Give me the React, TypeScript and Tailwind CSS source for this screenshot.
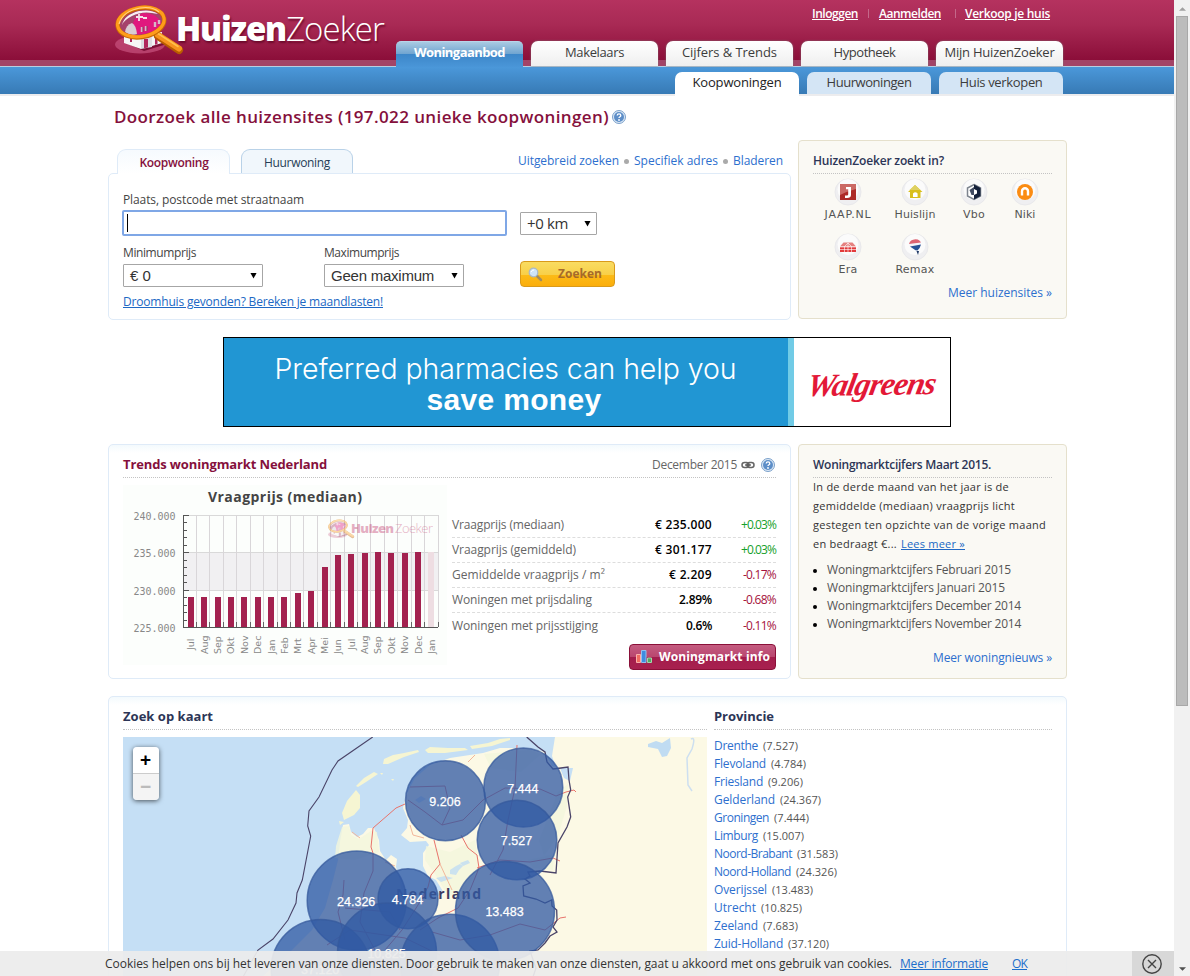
import React, { useLayoutEffect, useRef } from "react";

/* One line of text whose tracking is set so that the line is `w` pixels wide. */
function Fit({ w, className = "", children }: { w: number; className?: string; children: string }) {
  const ref = useRef<HTMLSpanElement>(null);
  useLayoutEffect(() => {
    const el = ref.current;
    if (!el) return;
    el.style.letterSpacing = "0px";
    const natural = el.getBoundingClientRect().width;
    el.style.letterSpacing = `${(w - natural) / children.length}px`;
  }, [w, children]);
  return (
    <span ref={ref} className={`inline-block shrink-0 whitespace-nowrap ${className}`}>
      {children}
    </span>
  );
}

function Magnifier({ className }: { className: string }) {
  return (
    <svg viewBox="0 0 70 50" className={className}>
      <ellipse cx="25" cy="39.500" rx="25" ry="9" fill="#c7527f" opacity=".7" />
      <path d="M9 37 L26 43 L46 36 L52 39 L29 46Z" fill="#7d0f37" />
      <path d="M9 27 L26 31 V44 L9 38Z" fill="#f6f6f6" />
      <path d="M26 31 L37 29 V42 L26 44Z" fill="#dcdce2" />
      <path d="M37 28 L47 27 V38 L37 41Z" fill="#f3f3f5" />
      <path d="M29 34h4v8.500l-4 .8z M40 33h2.500v6l-2.500 .8z M15 33h2v4h-2z" fill="#b0265c" />
      <ellipse cx="26" cy="18.500" rx="22" ry="13" fill="#a5426c" transform="rotate(-10 26 19)" />
      <path d="M7 20 Q9 10 24 6 Q37 4 43 9 Q28 5 17 11 Q9 15 7 20Z" fill="#f7eef2" />
      <path d="M17 24 Q18 11 28 8 Q41 8 46 17 L45 24 Q32 31 19 29Z" fill="#e0187e" />
      <path d="M10 27 Q11 20 17 18 Q21 20 22 29 Q15 31 10 27Z" fill="#d9ccd3" />
      <path d="M24 9 v7 M21 12 h7 M28 13h4" stroke="#f6dfe9" strokeWidth="1.800" />
      <path d="M27 22 v5 M31 21 v5 M40 17 v5 M44 15v4" stroke="#d8b9c8" strokeWidth="2.400" />
      <path d="M28 22 v5 M32 21 v5" stroke="#8a1a50" strokeWidth="1" />
      <path d="M43 31 L64 45" stroke="#b85c00" strokeWidth="8" strokeLinecap="round" />
      <path d="M43 30 L64 43.500" stroke="#f7931e" strokeWidth="6" strokeLinecap="round" />
      <path d="M43 28.500 L63 41.500" stroke="#ffc04d" strokeWidth="1.500" strokeLinecap="round" />
      <ellipse cx="26" cy="17.500" rx="23.500" ry="14.500" fill="none" stroke="#c96a05" strokeWidth="4.500" transform="rotate(-10 26 18)" />
      <ellipse cx="26" cy="17" rx="23.500" ry="14.500" fill="none" stroke="#ff9d1a" strokeWidth="3.200" transform="rotate(-10 26 18)" />
      <path d="M4 19 Q8 6 25 3 Q37 1 44 7" fill="none" stroke="#ffd48a" strokeWidth="1.200" />
    </svg>
  );
}

function HelpIcon({ className }: { className: string }) {
  return (
    <svg viewBox="0 0 14 14" className={className}>
      <circle cx="7" cy="7" r="6.500" fill="#dbe8f5" stroke="#7ba0ca" />
      <circle cx="7" cy="7" r="5" fill="#5d8ec8" />
      <path d="M5.200 5.500 Q5.300 3.900 7 3.900 Q8.800 3.900 8.800 5.400 Q8.800 6.400 7.600 7 Q7 7.300 7 8.100" fill="none" stroke="#fff" strokeWidth="1.300" />
      <circle cx="7" cy="10" r=".9" fill="#fff" />
    </svg>
  );
}

const mainTabs = [
  { t: "Makelaars", w: 59 },
  { t: "Cijfers & Trends", w: 95 },
  { t: "Hypotheek", w: 62 },
  { t: "Mijn HuizenZoeker", w: 110 },
];

function Header() {
  return (
    <header className="shrink-0 text-[#3c3c3c]">
      <div className="flex h-[67px] border-b border-[#b9cfe2] bg-[linear-gradient(#b5325f_0px,#a92a55_24px,#8b0e39_60px,#a34467_60px,#a34467_66px)]">
        <div className="ml-[115px] flex h-[60px] w-[281px] pt-[5px]">
          <Magnifier className="h-[50px] w-[70px] shrink-0" />
          <div className="-ml-[9px] flex h-[46px] items-center text-[33px] leading-none text-white [text-shadow:1px_2px_2px_#6d0a2c]">
            <Fit w={110} className="font-extrabold">Huizen</Fit>
            <Fit w={98} className="font-[350]">Zoeker</Fit>
          </div>
        </div>
        <div className="flex w-[667px] flex-col justify-between">
          <div className="flex h-[27px] items-center justify-end pr-[13px] text-[12px] font-semibold text-white">
            <Fit w={46} className="underline">Inloggen</Fit>
            <span className="mx-[10px] h-[9px] w-px bg-[#c4688a]" />
            <Fit w={62} className="underline">Aanmelden</Fit>
            <span className="mr-[9px] ml-[14px] h-[9px] w-px bg-[#c4688a]" />
            <Fit w={85} className="underline">Verkoop je huis</Fit>
          </div>
          <nav className="-mb-px flex h-[26px] gap-[8px] text-[13px]">
            <div className="flex w-[127px] justify-center rounded-t-[5px] border-t border-[#b9d5ea] bg-[linear-gradient(#a9cae2,#6fa4d0_12px,#3c86c8_12px,#4a96d8)] pt-px font-bold text-white">
              <Fit w={91}>Woningaanbod</Fit>
            </div>
            {mainTabs.map((m) => (
              <div key={m.t} className="mb-px flex w-[127px] justify-center rounded-t-[7px] bg-linear-to-b from-white to-[#efefef] pt-[2px] shadow-[0_0_2px_#777]">
                <Fit w={m.w}>{m.t}</Fit>
              </div>
            ))}
          </nav>
        </div>
      </div>
      <div className="flex h-[29px] justify-end gap-[8px] border-b-2 border-[#ececee] bg-linear-to-b from-[#4b98da] to-[#377ab5] pt-[5px] pr-[111px] text-[13px]">
        <div className="-mb-[2px] flex w-[124px] justify-center rounded-t-[7px] bg-white pt-px font-medium text-[#222]">
          <Fit w={89}>Koopwoningen</Fit>
        </div>
        <div className="flex w-[124px] justify-center rounded-t-[7px] bg-[#d4e5f5] pt-px">
          <Fit w={85}>Huurwoningen</Fit>
        </div>
        <div className="flex w-[124px] justify-center rounded-t-[7px] bg-[#d4e5f5] pt-px">
          <Fit w={83}>Huis verkopen</Fit>
        </div>
      </div>
    </header>
  );
}

function Select({ className, label, w }: { className: string; label: string; w: number }) {
  return (
    <div className={`flex h-[23px] items-center justify-between rounded-[1px] border border-[#a6a6a6] bg-white pr-[5px] pl-[6px] text-[15px] text-[#333] ${className}`}>
      <Fit w={w}>{label}</Fit>
      <svg viewBox="0 0 8 7" className="h-[7px] w-[7px]">
        <path d="M0.500 0.500h7L4 7z" fill="#000" />
      </svg>
    </div>
  );
}

function SearchPanel() {
  return (
    <section className="flex w-[683px] flex-col">
      <div className="-mb-px flex h-[34px] items-end pl-[9px] text-[12px]">
        <div className="flex h-[25px] w-[113px] justify-center rounded-t-[9px] border border-b-0 border-[#dfebf8] bg-linear-to-b from-[#f6fafe] to-white pt-[4px] pl-px font-semibold text-[#85103c]">
          <Fit w={69}>Koopwoning</Fit>
        </div>
        <div className="mb-px ml-[11px] flex h-[24px] w-[112px] justify-center rounded-t-[9px] border border-b-0 border-[#b9d2e8] bg-[#f1f7fc] pt-[4px] text-[#263d56]">
          <Fit w={66}>Huurwoning</Fit>
        </div>
        <div className="mb-[4px] ml-auto flex items-center gap-[5px] pr-[8px] text-[#2d6fce]">
          <Fit w={101}>Uitgebreid zoeken</Fit>
          <span className="size-[5px] rounded-full bg-[#aaa]" />
          <Fit w={84}>Specifiek adres</Fit>
          <span className="size-[5px] rounded-full bg-[#aaa]" />
          <Fit w={50}>Bladeren</Fit>
        </div>
      </div>
      <div className="-z-10 h-[147px] rounded-[5px] border border-[#dfebf8] bg-white px-[14px] pt-[17px] text-[12px] leading-[18px] text-[#444]">
        <div className="h-[19px]"><Fit w={181}>Plaats, postcode met straatnaam</Fit></div>
        <div className="-ml-px flex items-center gap-[13px]">
          <div className="flex h-[26px] w-[385px] items-center rounded-[2px] border-2 border-[#7fa7e6] bg-white pl-[3px]">
            <span className="h-[18px] w-px bg-black" />
          </div>
          <Select className="w-[77px]" label="+0 km" w={41} />
        </div>
        <div className="mt-[8px] flex">
          <div className="w-[201px]"><Fit w={73}>Minimumprijs</Fit></div>
          <Fit w={75}>Maximumprijs</Fit>
        </div>
        <div className="flex h-[26px] items-start pt-px font-['Liberation_Sans',sans-serif]">
          <Select className="mt-px w-[140px]" label="€ 0" w={21} />
          <Select className="mt-px ml-[61px] w-[140px]" label="Geen maximum" w={103} />
          <div className="-mt-[2px] ml-[56px] flex h-[26px] w-[95px] items-center rounded-[4px] border border-[#d99a1a] bg-[linear-gradient(#f9dc62,#f8cf48_13px,#fcbb17_13px,#fbae0c)] pl-[7px] font-['Open_Sans',sans-serif] font-bold text-[#a66a2a]">
            <svg viewBox="0 0 15 15" className="size-[15px] shrink-0">
              <path d="M8.500 8.500 L13 13" stroke="#a08a60" strokeWidth="2.500" strokeLinecap="round" />
              <circle cx="5.500" cy="5.500" r="4.300" fill="#cfe4f8" stroke="#a8b8c8" strokeWidth="1.200" />
              <path d="M3 5 Q4 3 6 3" stroke="#fff" fill="none" />
            </svg>
            <Fit w={44} className="ml-[15px]">Zoeken</Fit>
          </div>
        </div>
        <div className="pt-[5px] text-[#2068c4]"><Fit w={260} className="underline">Droomhuis gevonden? Bereken je maandlasten!</Fit></div>
      </div>
    </section>
  );
}

const sites = [
  { n: "JAAP.NL", w: 47 },
  { n: "Huislijn", w: 41 },
  { n: "Vbo", w: 22 },
  { n: "Niki", w: 21 },
  { n: "Era", w: 19 },
  { n: "Remax", w: 39 },
];

function SiteIcon({ name }: { name: string }) {
  return (
    <svg viewBox="0 0 28 28" className="size-[28px]">
      <circle cx="14" cy="14" r="13" fill="#efeff1" stroke="#e9e9eb" />
      <circle cx="14" cy="11.500" r="10.500" fill="#fbfbfb" />
      {name === "JAAP.NL" && (
        <g>
          <path d="M6 6h16v16H6z" fill="#ad2a27" />
          <path d="M6 6h16v5Q14 13 6 17z" fill="#cb6965" />
          <path d="M12 9h5v8q0 3-4 3h-2v-2.500h2q1.200 0 1.200-1V11.300H12z" fill="#fff" />
        </g>
      )}
      {name === "Huislijn" && (
        <g>
          <path d="M14 7 L21.500 14 H19.500 V20 H9 V14 H7Z" fill="#d9bf1c" />
          <path d="M14 7 L19.500 12 H8.500Z" fill="#dfd162" />
          <path d="M12 19v-3.500q2.300-2.500 4.600 0V19z" fill="#fff" />
        </g>
      )}
      {name === "Vbo" && (
        <g>
          <path d="M14 6.500 L20.500 10 V18 L14 21.500 L7.500 18 V10Z" fill="#fff" stroke="#7d848e" strokeWidth="1.500" />
          <path d="M14 6.500 L20.500 10 V18 L14 21.500 V17 L17 15.500 V12.500 L14 11Z" fill="#14213a" />
          <path d="M9.500 12 L14 9 V17 H11.500Z" fill="#414c62" />
        </g>
      )}
      {name === "Niki" && (
        <g>
          <circle cx="14" cy="14" r="8" fill="#fb8c13" />
          <path d="M11 17.500v-4.300a3 3 0 0 1 6 0v4.300" fill="none" stroke="#fff" strokeWidth="2.400" />
        </g>
      )}
      {name === "Era" && (
        <g>
          <path d="M6 13.500 L9.500 9.500 H18.500 L22 13.500Z" fill="#e58180" />
          <path d="M6 14h16v5H6z" fill="#e23a3c" />
          <path d="M10.500 19v-5.500L14 10l3.500 3.500V19 M14 10v9 M6 16.500h16 M6 14h16" fill="none" stroke="#fff" strokeWidth=".6" />
        </g>
      )}
      {name === "Remax" && (
        <g>
          <path d="M8 11q1-4.500 6.500-4.800 5 .1 5.600 4.600z" fill="#df6472" />
          <path d="M8 11l12-1.500v2L9 13.500z" fill="#f5f5fa" />
          <path d="M9 13.500l11-2q-1 4-3.500 6l-2-.2z" fill="#2a5397" />
          <path d="M15.500 18h2.500l-1 4z" fill="#1c3563" />
        </g>
      )}
    </svg>
  );
}

const card = "w-[269px] rounded-[4px] border border-[#e5e0cc] bg-[#faf9f4] px-[14px] text-[12px]";

function SitesPanel() {
  return (
    <aside className={`${card} h-[179px]`}>
      <div className="flex h-[33px] items-end border-b border-dotted border-[#c3c3c3] pb-[3px] font-semibold text-[#2c3556]">
        <Fit w={131}>HuizenZoeker zoekt in?</Fit>
      </div>
      <div className="grid h-[111px] auto-rows-[55px] grid-cols-[70px_64px_54px_48px] pt-[4px] font-['DejaVu_Sans',sans-serif] text-[11px] leading-[18px] text-[#555]">
        {sites.map((s) => (
          <div key={s.n} className="flex flex-col items-center">
            <SiteIcon name={s.n} />
            <Fit w={s.w}>{s.n}</Fit>
          </div>
        ))}
      </div>
      <div className="flex justify-end leading-[16px] text-[#2d6fce]"><Fit w={104}>Meer huizensites »</Fit></div>
    </aside>
  );
}

function Banner() {
  return (
    <div className="mt-[17px] ml-[115px] flex h-[90px] w-[728px] shrink-0 border border-black bg-white">
      <div className="flex w-[570px] flex-col items-center border-r-[6px] border-[#71cbe6] bg-[#2196d3] pr-px text-white">
        <Fit w={462} className="mt-[13px] font-[Inter,sans-serif] text-[28.500px] leading-[36px] font-light">Preferred pharmacies can help you</Fit>
        <Fit w={175} className="-mt-[3px] ml-[17px] font-['Liberation_Sans',sans-serif] text-[30px] leading-[32px] font-bold">save money</Fit>
      </div>
      <div className="flex flex-1 items-center justify-center text-[#e31837]">
        <Fit w={135} className="-rotate-1 -skew-x-12 pt-[4px] font-['Liberation_Serif',serif] text-[32px] leading-none font-bold italic">Walgreens</Fit>
      </div>
    </div>
  );
}

const bars: [string, number][] = [
  ["Jul", 597], ["Aug", 597], ["Sep", 597], ["Okt", 597], ["Nov", 597], ["Dec", 597], ["Jan", 597], ["Feb", 597],
  ["Mrt", 593], ["Apr", 591], ["Mei", 567], ["Jun", 555], ["Jul", 554], ["Aug", 553], ["Sep", 552], ["Okt", 553],
  ["Nov", 553], ["Dec", 552], ["Jan", 552],
];

function Chart() {
  return (
    <svg viewBox="123 485 324 180" className="h-[180px] w-[324px] shrink-0">
      <rect x="123" y="485" width="324" height="180" fill="#fcfefc" />
      <text x="208" y="502" textLength="154" className="fill-[#444] text-[14px] font-bold">Vraagprijs (mediaan)</text>
      <rect x="184" y="553" width="254" height="37" fill="#f1f0f2" />
      <g shapeRendering="crispEdges">
        {[515, 552, 590].map((y) => <rect key={y} x="184" y={y} width="254" height="1" fill="#d9d9d9" />)}
        {bars.map((_, i) => <rect key={i} x={Math.round(196 + i * 13.42)} y="515" width="1" height="112" fill="#d9d6d9" />)}
        {bars.map(([, y], i) => (
          <rect key={i} x={Math.round(187.800 + i * 13.37)} y={y} width="6" height={627 - y} fill={i === 18 ? "#eedde2" : "#a3214f"} />
        ))}
        {bars.map((_, i) => <rect key={i} x={Math.round(196 + i * 13.42)} y="622" width="1" height="5" fill="#666" />)}
        <rect x="183" y="515" width="1" height="113" fill="#555" />
        <rect x="183" y="627" width="255" height="1" fill="#555" />
        {Array.from({ length: 16 }, (_, i) => (
          <rect key={i} x="183" y={Math.round(515 + i * 7.47)} width={i % 5 === 0 ? 6 : 4} height="1" fill="#555" />
        ))}
      </g>
      {["240.000", "235.000", "230.000", "225.000"].map((t, i) => (
        <text key={t} x="133.500" y={519.500 + i * 37.5} className="fill-[#888] font-['DejaVu_Sans_Mono',monospace] text-[10px]" textLength="42">{t}</text>
      ))}
      {bars.map(([t], i) => (
        <text key={i} transform={`translate(${194.300 + i * 13.37} ${t === "Jul" ? 650 : 654}) rotate(-90)`} className="fill-[#888] font-['DejaVu_Sans',sans-serif] text-[9.500px]">{t}</text>
      ))}
      <g opacity=".4">
        <svg x="328" y="519" width="27" height="20"><Magnifier className="h-[20px] w-[27px]" /></svg>
        <text x="351" y="533" textLength="43" className="fill-[#c2386c] text-[13px] font-extrabold">Huizen</text>
        <text x="395" y="533" textLength="38" className="fill-[#c2386c] text-[13px] font-light">Zoeker</text>
      </g>
    </svg>
  );
}

const trends = [
  { l: "Vraagprijs (mediaan)", lw: 112, v: "€ 235.000", vw: 57, c: "+0.03%", cw: 35, up: true },
  { l: "Vraagprijs (gemiddeld)", lw: 124, v: "€ 301.177", vw: 57, c: "+0.03%", cw: 35, up: true },
  { l: "Gemiddelde vraagprijs / m²", lw: 153, v: "€ 2.209", vw: 43, c: "-0.17%", cw: 33, up: false },
  { l: "Woningen met prijsdaling", lw: 140, v: "2.89%", vw: 33, c: "-0.68%", cw: 33, up: false },
  { l: "Woningen met prijsstijging", lw: 146, v: "0.6%", vw: 26, c: "-0.11%", cw: 33, up: false },
];

function TrendsPanel() {
  return (
    <section className="h-[235px] w-[683px] rounded-[5px] border border-[#dfebf8] bg-[linear-gradient(#f3fafd,#ffffff_8px)] px-[14px] text-[12px] text-[#666]">
      <div className="flex h-[33px] items-center border-b border-dotted border-[#c3c3c3] pt-[8px]">
        <Fit w={204} className="text-[13px] font-bold text-[#85103c]">Trends woningmarkt Nederland</Fit>
        <Fit w={85} className="ml-auto">December 2015</Fit>
        <svg viewBox="0 0 14 8" className="mr-[6px] ml-[4px] h-[8px] w-[14px]">
          <rect x="1" y="1.500" width="7" height="5" rx="2.500" fill="none" stroke="#666" strokeWidth="1.500" />
          <rect x="6" y="1.500" width="7" height="5" rx="2.500" fill="none" stroke="#666" strokeWidth="1.500" />
          <path d="M4 4h6" stroke="#555" strokeWidth="1.300" />
        </svg>
        <HelpIcon className="mr-px size-[14px]" />
      </div>
      <div className="flex pt-[7px]">
        <Chart />
        <div className="ml-[5px] flex flex-1 flex-col pt-[28px]">
          {trends.map((r, i) => (
            <div key={r.l} className={`flex h-[25px] items-center ${i < 4 ? "border-b border-dashed border-[#ddd]" : ""}`}>
              <Fit w={r.lw}>{r.l}</Fit>
              <Fit w={r.vw} className="ml-auto font-semibold text-black">{r.v}</Fit>
              <div className={`flex w-[64px] justify-end ${r.up ? "text-[#16a02c]" : "text-[#a5123c]"}`}>
                <Fit w={r.cw}>{r.c}</Fit>
              </div>
            </div>
          ))}
          <div className="mt-[6px] ml-auto flex h-[26px] w-[147px] items-center rounded-[4px] border border-[#8a1039] bg-[linear-gradient(#c45c80,#b9466f_12px,#a31d4c_12px,#a8204f)] pl-[6px] font-bold text-white">
            <svg viewBox="0 0 16 16" className="size-[16px] shrink-0">
              <path d="M.5 5.500h4v8h-4z" fill="#f06a62" stroke="#fbb0aa" />
              <path d="M5.500 1.500h4.500v12H5.500z" fill="#3f8ce0" stroke="#91bff0" />
              <path d="M11.500 9h4v4.500h-4z" fill="#52a765" stroke="#a5d6ae" />
            </svg>
            <Fit w={111} className="ml-[7px]">Woningmarkt info</Fit>
          </div>
        </div>
      </div>
    </section>
  );
}

const intro = [
  { t: "In de derde maand van het jaar is de", w: 196 },
  { t: "gemiddelde (mediaan) vraagprijs licht", w: 202 },
  { t: "gestegen ten opzichte van de vorige maand", w: 233 },
];
const news = [
  { t: "Woningmarktcijfers Februari 2015", w: 184 },
  { t: "Woningmarktcijfers Januari 2015", w: 178 },
  { t: "Woningmarktcijfers December 2014", w: 194 },
  { t: "Woningmarktcijfers November 2014", w: 194 },
];

function NewsPanel() {
  return (
    <aside className={`${card} h-[235px]`}>
      <div className="flex h-[33px] items-end border-b border-dotted border-[#c3c3c3] pb-[3px] font-semibold text-[#2c3556]">
        <Fit w={178}>Woningmarktcijfers Maart 2015.</Fit>
      </div>
      <div className="-mt-px flex flex-col text-[11px] leading-[19px] text-[#333]">
        {intro.map((p) => <div key={p.t} className="h-[19px]"><Fit w={p.w}>{p.t}</Fit></div>)}
        <div className="flex h-[19px] gap-[4px]">
          <Fit w={84}>en bedraagt €...</Fit>
          <Fit w={64} className="text-[#2068c4] underline">Lees meer »</Fit>
        </div>
      </div>
      <ul className="pt-[8px] leading-[18px] text-[#555]">
        {news.map((n) => (
          <li key={n.t} className="flex h-[18px] items-center">
            <span className="mt-px mr-[10px] size-[4px] rounded-full bg-black" />
            <Fit w={n.w}>{n.t}</Fit>
          </li>
        ))}
      </ul>
      <div className="flex justify-end pt-[16px] leading-[18px] text-[#2d6fce]"><Fit w={119}>Meer woningnieuws »</Fit></div>
    </aside>
  );
}

const circles: [number, number, number, string][] = [
  [356.7, 900.5, 50, "24.326"], [320.7, 969, 50, "37.120"], [408, 898.7, 30.5, "4.784"], [387, 952.5, 50, "10.825"],
  [450, 963.7, 50, "24.367"], [445.5, 800.7, 40.5, "9.206"], [523.3, 787.5, 40, "7.444"], [517, 840, 40.3, "7.527"], [505, 911, 50, "13.483"],
];

function MapView() {
  return (
    <div className="relative h-[240px] w-[584px] shrink-0">
      <svg viewBox="123 737 584 240" className="h-[240px] w-[584px]">
        <rect x="123" y="737" width="584" height="240" fill="#c5dff5" />
        <path d="M555 737 H707 V977 H262 L292 950 L312 930 L325 908 L333 880 L338 860 L340 842 L343 825 L349 824 L351 832 L357 837 L363 834 L368 828 L374 828 L379 840 L380 851 L386 860 L391 855 L397 859 L396 867 L400 880 L402 895 L430 900 L444 893 L436 880 L428 876 L423 866 L423 853 L429 845 L426 841 L410 842 L401 835 L407 828 L408 820 L403 808 L406 795 L415 778 L430 765 L450 758 L483 753 L500 748 L530 748 L545 752 L552 766 L560 768 L564 778 L570 781 L573 768 L556 768 L552 756Z" fill="#fcf9e5" />
        <path d="M336 846l6-19 7-1 2 9 8 4 12-8 6 1 2 20-24 8-20-2z M484 754l45-4 12 4-20 18-30-4z M558 792l10-8-1 22-9 30-14 20-5-16z M426 846l24 6 25-12 4 25-14 28-17 3-13-22-10-14z M528 860l26-6-1 16-20-2z" fill="#f3f6dc" opacity=".8" />
        <g fill="#f6f5d2">
          <path d="M356 790 L360 795 L360 808 L354 815 L344 820 L342 813 L347 801Z" />
          <path d="M356 786 L364 778 L374 772 L378 774 L366 782 L358 787Z" />
          <path d="M384 759 L393 755 L404 753 L418 750 L419 752 L404 757 L388 764 L383 764Z" />
          <path d="M425 750 L430 747 L448 748 L465 748 L468 750 L445 753 L428 753Z" />
          <path d="M470 746 L488 743 L500 739 L510 738 L510 740 L492 746 L472 749Z M339 821l5 1-4 3z M380 773l3 0-1 2z M391 779l3 0-1 2z" />
        </g>
        <g fill="#c0dcf2">
          <path d="M648 744 L656 741 L662 743 L670 738 L671 748 L667 756 L662 757 L658 749 L648 747Z" />
          <path d="M450 870l6-4 4-2 3 2-4 4-3 5-6-1z M436 878l9-2 8 2-12 4z M460 863l8-3 2 3-7 3z M415 800l6-4 5 3-7 4z" opacity=".8" />
        </g>
        <path d="M691 739 Q696 736 692 749 L687 758 L688 785 L692 791" fill="none" stroke="#cddff0" strokeWidth="1.500" />
        <g fill="none" stroke="#e8736b">
          <path d="M405 804 L396 808 L373 828 L371 847 L373 853 L373 871 L364 893 L360 922 L375 950" />
          <path d="M408 800 L425 812 L442 825 L463 820 L483 800 L505 788 L540 789 L556 796 L566 792 L574 790 L576 792" />
          <path d="M434 840 L440 864 L431 875 L428 887 L418 905 L402 930 L385 950" />
          <path d="M461 835 L468 848 L477 855 L479 868 L470 890 L458 908 L438 918 L420 930" />
          <path d="M517 745 L515 788 L508 820 L503 850 L490 875" />
          <path d="M477 868 L500 860 L530 862 L553 858 L560 861" />
          <path d="M432 932 L460 940 L490 935 L520 924 L545 930 L560 918 L566 917 M410 787 L445 786 L450 808 L442 825 M344 880 L343 895 L338 912 L345 940 M327 945 L350 930 L405 938 L440 955 M345 908 L390 912 L400 930" />
        </g>
        <g fill="none" stroke="#f2b79b">
          <path d="M352 832 L360 838 M410 825 L413 835 L424 838 M440 864 L452 890 M468 762 L475 755 M385 862 L395 866" />
        </g>
        <path d="M372.700 737 L338 761 L332 770 L319 797 L309 811 L307.700 826 L310.700 836 L302.300 880 L297 893 L296 903 L288 920 L273 939 L258 950 L243 977" fill="none" stroke="#4a4468" strokeWidth="1.100" />
        <path d="M526.700 737 L538 747 L545 752 L547 762 L553 769 L561 768 L568 767 L569 780 L570.700 790 L567.700 797 L570.700 817 L567 827 L558 843 L556 873 L540 871 L528 872 L530 876 L525 879 L530 883 L523 886 L523.700 896 L536 899 L545 903 L551.700 900 L552 906 L556.700 910 L557 920 L553 927 L557 932 L550 936 L545 943 L538 950 L530 951 L536 968 L533 977" fill="none" stroke="#4a4468" strokeWidth="1.300" />
        <text x="396" y="898.500" textLength="85" className="fill-[#403a5e] text-[14px] font-bold">Nederland</text>
        {circles.map(([x, y, r, t]) => (
          <circle key={t} cx={x} cy={y} r={r - 0.5} fill="#3059a3" fillOpacity=".76" stroke="#35599c" strokeOpacity=".75" strokeWidth="1.500" />
        ))}
        {circles.map(([x, y, , t]) => (
          <text key={t} x={x - 0.5} y={y + 5} textAnchor="middle" className="fill-white font-['Liberation_Sans',sans-serif] text-[12.500px]" stroke="#fff" strokeWidth=".25">{t}</text>
        ))}
      </svg>
      <div className="absolute top-[10px] left-[10px] flex w-[26px] flex-col overflow-hidden rounded-[4px] text-center font-['Liberation_Sans',sans-serif] text-[19px] leading-[26px] font-bold shadow-[0_1px_5px_rgba(0,0,0,0.65)]">
        <span className="h-[27px] border-b border-[#ccc] bg-white pr-px text-black">+</span>
        <span className="h-[26px] bg-[#f4f4f4] pr-px text-[#bbb]">−</span>
      </div>
    </div>
  );
}

const provinces: [string, number, string, number][] = [
  ["Drenthe", 44, "(7.527)", 35], ["Flevoland", 52, "(4.784)", 35], ["Friesland", 49, "(9.206)", 35], ["Gelderland", 61, "(24.367)", 41],
  ["Groningen", 55, "(7.444)", 35], ["Limburg", 44, "(15.007)", 41], ["Noord-Brabant", 78, "(31.583)", 41], ["Noord-Holland", 77, "(24.326)", 41],
  ["Overijssel", 53, "(13.483)", 41], ["Utrecht", 42, "(10.825)", 41], ["Zeeland", 44, "(7.683)", 35], ["Zuid-Holland", 69, "(37.120)", 41],
];

function MapPanel() {
  return (
    <section className="mt-[17px] flex h-[300px] w-[959px] shrink-0 rounded-[5px] border border-[#dfebf8] bg-[linear-gradient(#f3fafd,#ffffff_8px)] px-[14px] text-[#2c3556]">
      <div className="w-[584px]">
        <div className="mb-[7px] flex h-[33px] items-center border-b border-dotted border-[#c3c3c3] pt-[8px] text-[13px] font-bold">
          <Fit w={90}>Zoek op kaart</Fit>
        </div>
        <MapView />
      </div>
      <div className="ml-[7px] w-[338px]">
        <div className="mb-[7px] flex h-[33px] items-center border-b border-dotted border-[#c3c3c3] pt-[8px] text-[13px] font-bold">
          <Fit w={60}>Provincie</Fit>
        </div>
        {provinces.map(([n, w, c, cw]) => (
          <div key={n} className="flex h-[18px] items-center gap-[5px] text-[12px]">
            <Fit w={w} className="text-[#2d6fce]">{n}</Fit>
            <Fit w={cw} className="text-[11px] text-[#555]">{c}</Fit>
          </div>
        ))}
      </div>
    </section>
  );
}

export default function App() {
  return (
    <div className="relative flex h-[976px] w-[1190px] overflow-hidden bg-white font-['Open_Sans','Noto_Sans',sans-serif]">
      <div className="flex w-[1174px] flex-col overflow-hidden">
        <Header />
        <main className="isolate flex flex-col pl-[108px]">
          <h1 className="flex h-[44px] items-center gap-[3px] pb-[2px] pl-[6px] text-[17px] font-semibold text-[#85103c]">
            <Fit w={495}>Doorzoek alle huizensites (197.022 unieke koopwoningen)</Fit>
            <HelpIcon className="size-[14px]" />
          </h1>
          <div className="flex h-[180px] gap-[7px]">
            <SearchPanel />
            <SitesPanel />
          </div>
          <Banner />
          <div className="mt-[17px] flex gap-[7px]">
            <TrendsPanel />
            <NewsPanel />
          </div>
          <MapPanel />
        </main>
      </div>
      <div className="flex w-[16px] flex-col items-center justify-between bg-[#f1f1f1] pb-[5px]">
        <div className="flex flex-col items-center">
          <svg viewBox="0 0 8 4" className="mt-[7px] mb-[5px] h-[4px] w-[7px]"><path d="M0 4h8L4 0z" fill="#a0a0a0" /></svg>
          <div className="h-[690px] w-[12px] border border-[#a8a8a8] bg-[#bcbcbc]" />
        </div>
        <svg viewBox="0 0 8 4" className="h-[4px] w-[7px]"><path d="M0 0h8L4 4z" fill="#505050" /></svg>
      </div>
      <div className="absolute bottom-0 left-0 flex h-[25px] w-[1174px] items-center bg-[#ececec]/93 pl-[105px] text-[12px] text-[#333]">
        <Fit w={787}>Cookies helpen ons bij het leveren van onze diensten. Door gebruik te maken van onze diensten, gaat u akkoord met ons gebruik van cookies.</Fit>
        <Fit w={88} className="ml-[8px] text-[#1c6ecb] underline">Meer informatie</Fit>
        <Fit w={15} className="ml-[24px] text-[#1c6ecb] underline">OK</Fit>
        <div className="ml-auto flex h-[25px] w-[42px] items-center justify-center bg-[#d8d8d8] pr-[2px]">
          <svg viewBox="0 0 20 20" className="mt-px size-[20px]" fill="none" stroke="#444" strokeWidth="1.400">
            <circle cx="10" cy="10" r="9.200" />
            <path d="M6 6l8 8M14 6l-8 8" />
          </svg>
        </div>
      </div>
    </div>
  );
}
